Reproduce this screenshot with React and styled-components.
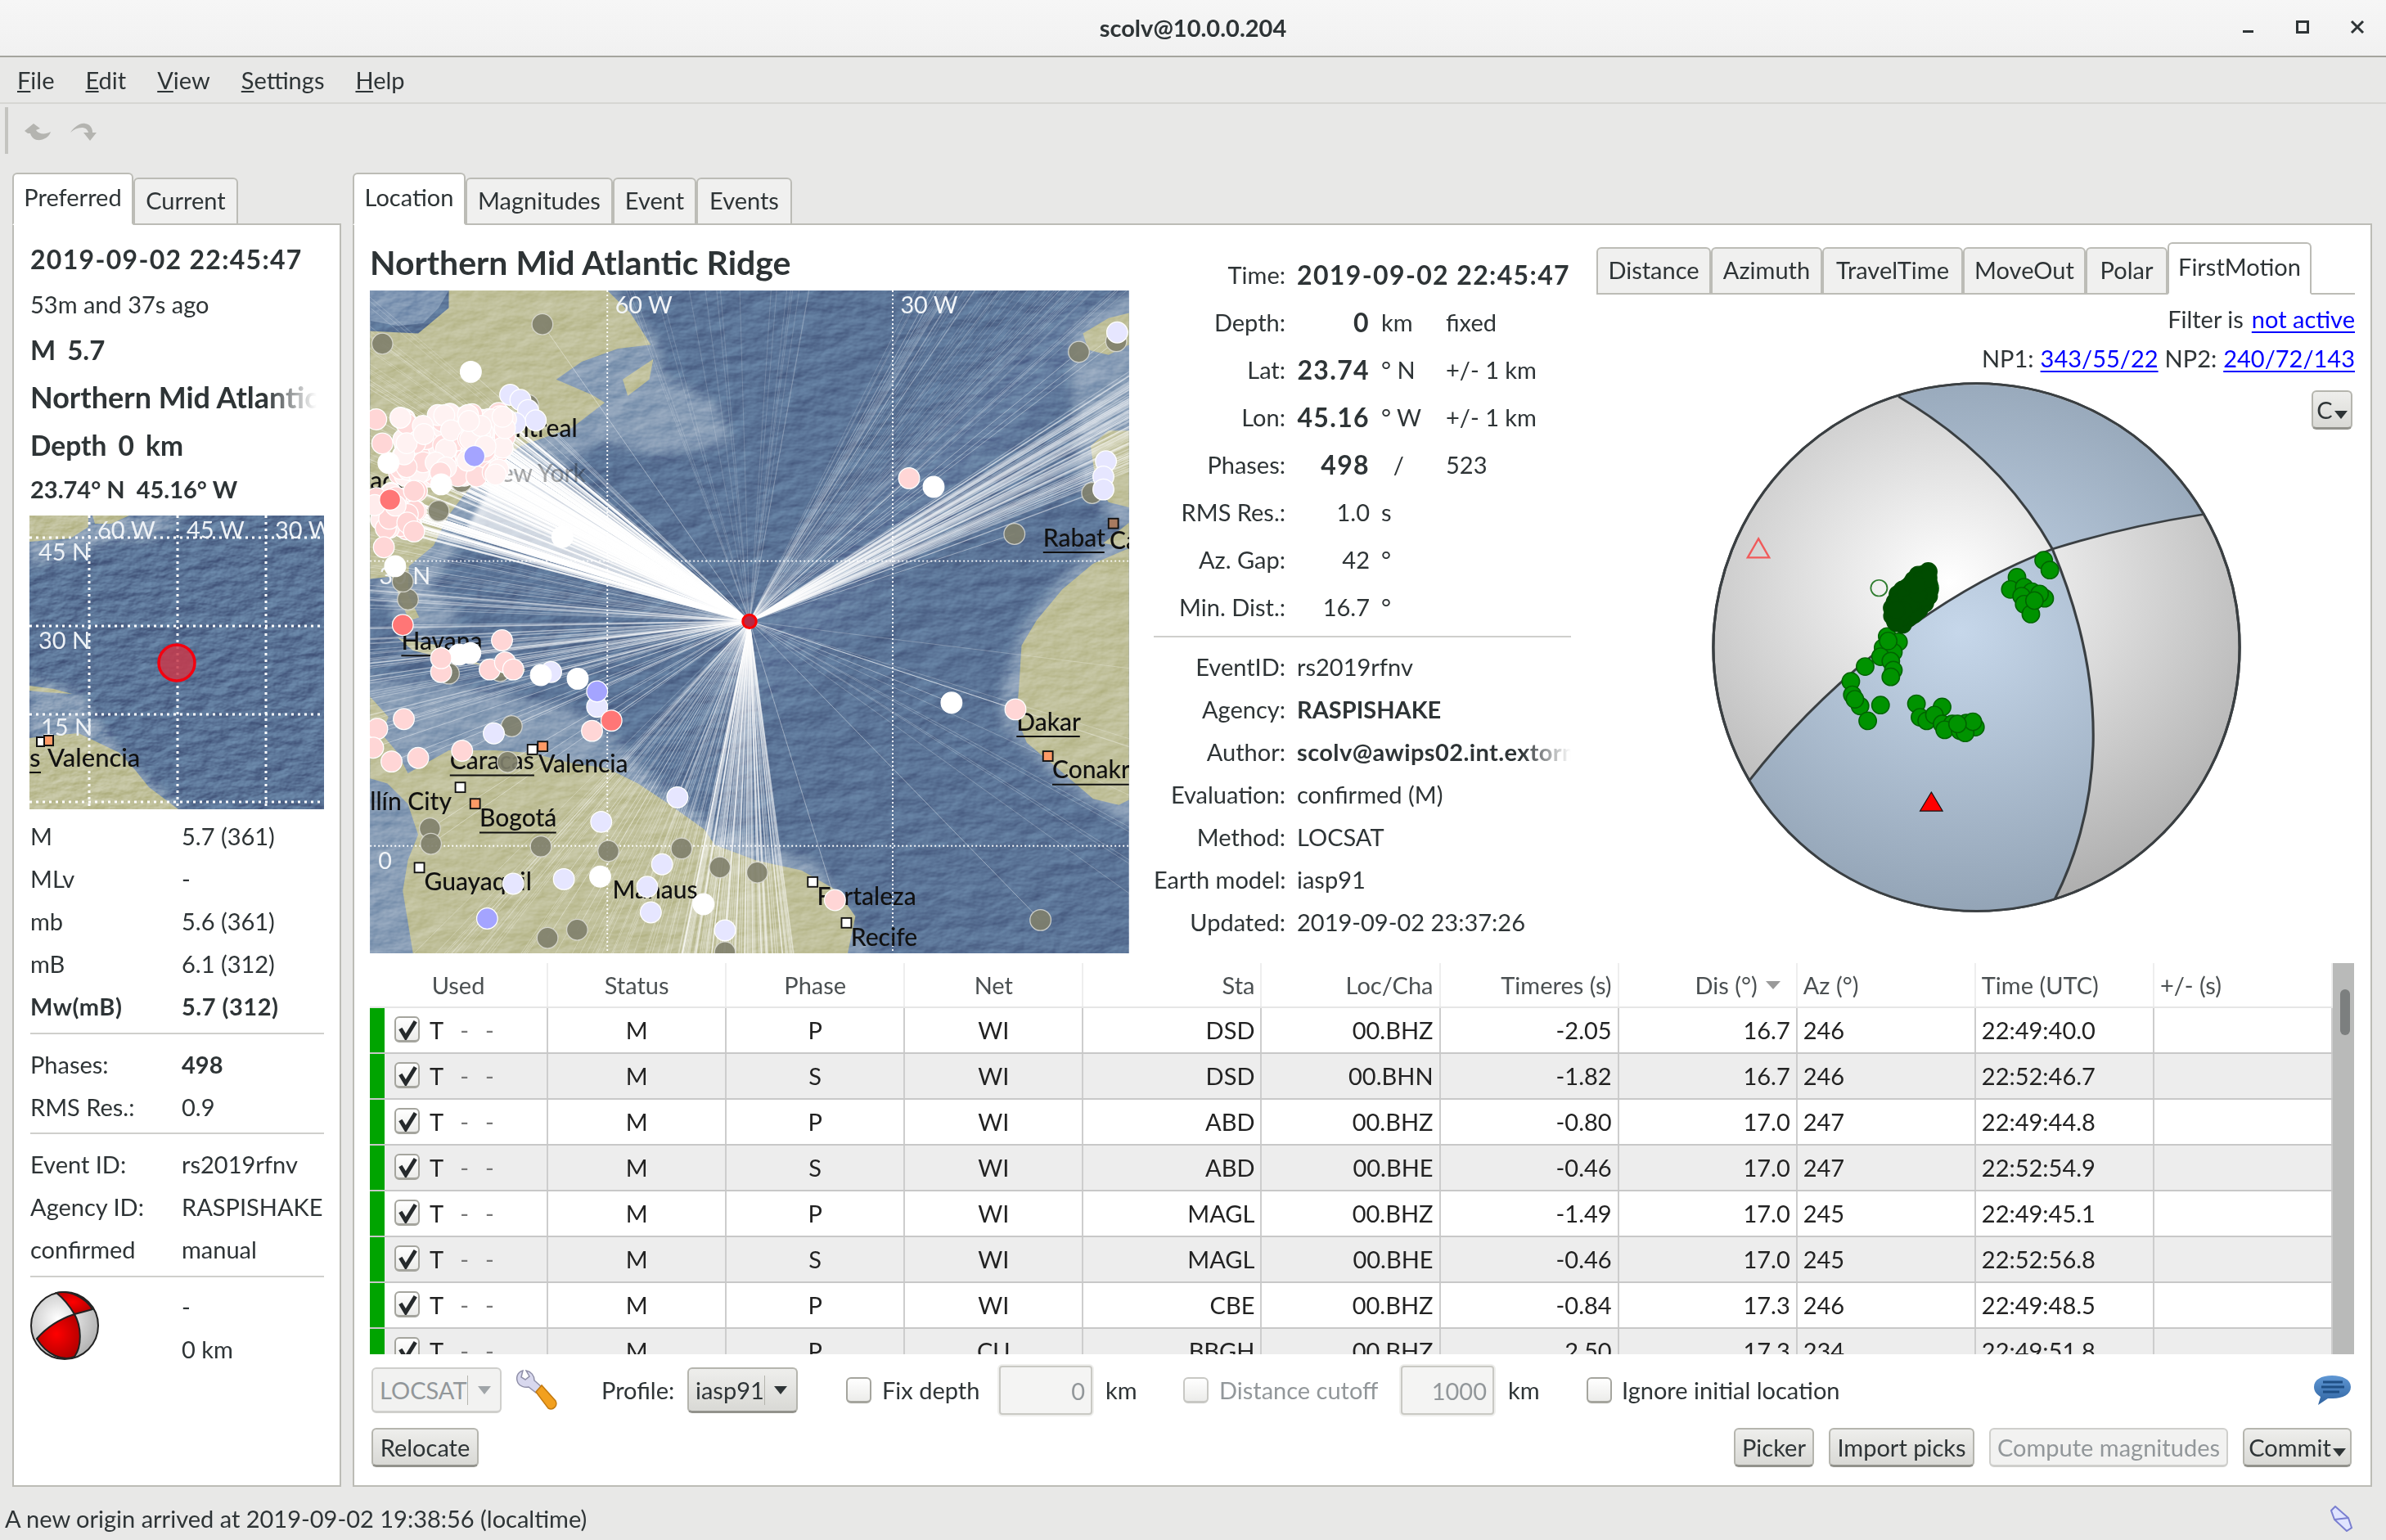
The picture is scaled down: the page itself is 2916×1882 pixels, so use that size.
import React from 'react';
import styled, { createGlobalStyle } from 'styled-components';

const FONT = `Lato, "Noto Sans", sans-serif`;
const INK = '#2e3436';
const OCEAN = '#5a7396';
const SHELF = '#94a8bf';
const LAND = '#c0c09a';

const GlobalStyle = createGlobalStyle`
    * { box-sizing: border-box; }
    html, body { margin: 0; padding: 0; background: #e8e8e7; }
    body { font-family: ${FONT}; font-size: 29px; color: ${INK}; }
`;

// small seeded generator so the scattered map points stay put between runs
const seeded = (seed) => {
    let s = seed;
    return () => {
        s = (s * 16807) % 2147483647;
        return (s - 1) / 2147483646;
    };
};

const Window = styled.div`
    width: 2916px;
    height: 1882px;
    display: flex;
    flex-direction: column;
    overflow: hidden;
    background: #e8e8e7;
`;

const TitleBar = styled.div`
    height: 70px;
    flex: none;
    display: flex;
    align-items: center;
    justify-content: flex-end;
    background: linear-gradient(#f6f6f6, #f1f1f1);
    border-bottom: 2px solid #a5a59e;
    position: relative;
    padding: 0 26px 2px 0;
    gap: 49px;
`;

const WindowTitle = styled.div`
    position: absolute;
    left: 0;
    right: 0;
    text-align: center;
    font-weight: 700;
    font-size: 29px;
`;

const MenuBar = styled.div`
    height: 57px;
    flex: none;
    display: flex;
    align-items: center;
    gap: 38px;
    padding-left: 21px;
    border-bottom: 2px solid #d6d6d3;
`;

const MenuItem = styled.span`
    &::first-letter { text-decoration: underline; }
`;

const ToolBar = styled.div`
    height: 84px;
    flex: none;
    display: flex;
    align-items: flex-start;
    padding: 4px 0 0 6px;
`;

const Handle = styled.div`
    width: 4px;
    height: 57px;
    background: #c4c4c0;
`;

const ToolIcon = styled.svg`
    width: 33px;
    height: 23px;
    margin: 19px 0 0 ${(p) => p.$gap}px;
`;

const Body = styled.div`
    height: 1606px;
    flex: none;
    display: flex;
    padding: 0 15px;
    gap: 14px;
`;

const Side = styled.div`
    width: 402px;
    flex: none;
    display: flex;
    flex-direction: column;
`;

const Main = styled.div`
    width: 2468px;
    flex: none;
    display: flex;
    flex-direction: column;
`;

const TabBar = styled.div`
    height: 64px;
    flex: none;
    display: flex;
    align-items: flex-end;
    margin-bottom: -2px;
    position: relative;
    z-index: 1;
`;

const Tab = styled.div`
    width: ${(p) => p.$w}px;
    height: ${(p) => (p.$active ? 64 : 58)}px;
    flex: none;
    display: flex;
    align-items: center;
    justify-content: center;
    padding-bottom: ${(p) => (p.$active ? 5 : 4)}px;
    background: ${(p) => (p.$active ? '#fff' : '#f0f0ef')};
    border: 2px solid #bcbcb6;
    border-bottom: ${(p) => (p.$active ? '2px solid #fff' : '2px solid #bcbcb6')};
    border-radius: 6px 6px 0 0;
`;

const Panel = styled.div`
    flex: 1;
    min-height: 0;
    background: #fff;
    border: 2px solid #bcbcb6;
    display: flex;
    flex-direction: column;
`;

const SidePanel = styled(Panel)`
    padding: 14px 19px 0 20px;
`;

const SideLine = styled.div`
    height: ${(p) => p.$h}px;
    display: flex;
    align-items: center;
    white-space: nowrap;
    overflow: hidden;
    font-weight: ${(p) => (p.$bold ? 700 : 400)};
    font-size: ${(p) => p.$size || 29}px;
    word-spacing: ${(p) => p.$spread || 0}px;
    letter-spacing: ${(p) => p.$track || 0}px;
    ${(p) => p.$fade && `
        mask-image: linear-gradient(to right, #000 82%, transparent 100%);
        width: 350px;
    `}
`;

const MiniMap = styled.svg`
    display: block;
    flex: none;
    width: 360px;
    height: 359px;
    margin: 7px 0 6px -1px;
`;

const InfoPair = styled.div`
    height: ${(p) => p.$h || 52.2}px;
    display: grid;
    grid-template-columns: 185px 1fr;
    align-items: center;
    white-space: nowrap;
    font-weight: ${(p) => (p.$bold ? 700 : 400)};
    letter-spacing: ${(p) => (p.$bold ? 0.5 : 0)}px;
`;

const StrongValue = styled.span`
    font-weight: 700;
`;

const Rule = styled.div`
    height: 2px;
    flex: none;
    background: #cfcfcc;
    margin: ${(p) => p.$top}px 0 ${(p) => p.$bottom}px;
`;

const BallRow = styled.div`
    display: grid;
    grid-template-columns: 185px 1fr;
`;

const SmallBall = styled.svg`
    width: 84px;
    height: 84px;
    margin-top: 7px;
`;

const TopRow = styled.div`
    height: 890px;
    flex: none;
    display: flex;
    padding-left: 19px;
`;

const MapColumn = styled.div`
    width: 928px;
    flex: none;
`;

const RegionTitle = styled.div`
    height: 80px;
    padding-top: 24px;
    font-size: 41px;
    font-weight: 700;
    line-height: 44px;
    white-space: nowrap;
`;

const BigMap = styled.svg`
    display: block;
    width: 928px;
    height: 810px;
`;

const InfoColumn = styled.div`
    width: 510px;
    flex: none;
    margin-left: 30px;
    padding-top: 31px;
`;

const FactRow = styled.div`
    height: ${(p) => p.$h}px;
    display: grid;
    grid-template-columns: 161px 89px 65px auto;
    column-gap: 14px;
    align-items: center;
    white-space: nowrap;
`;

const FactLabel = styled.div`
    text-align: right;
`;

const FactNumber = styled.div`
    text-align: right;
    ${(p) => p.$bold && `
        font-weight: 700;
        font-size: 32px;
        letter-spacing: 1.35px;
    `}
`;

const FactWide = styled.div`
    grid-column: 2 / -1;
    font-weight: ${(p) => (p.$bold ? 700 : 400)};
    overflow: hidden;
    ${(p) => p.$digits && `
        font-size: 32px;
        letter-spacing: 1.37px;
    `}
    ${(p) => p.$fade && `
        letter-spacing: 0.4px;
        mask-image: linear-gradient(to right, #000 82%, transparent 100%);
    `}
`;

const PlotColumn = styled.div`
    width: 927px;
    flex: none;
    margin-left: 31px;
    padding-top: 20px;
`;

const PlotTabs = styled.div`
    height: 65px;
    display: flex;
    align-items: flex-end;
    border-bottom: 2px solid #bcbcb6;
`;

const PlotTab = styled(Tab)`
    margin-bottom: -2px;
`;

const PlotLine = styled.div`
    height: ${(p) => p.$h}px;
    display: flex;
    justify-content: flex-end;
    align-items: center;
    gap: ${(p) => p.$gap || 10}px;
    white-space: nowrap;
`;

const LinkText = styled.span`
    color: #0000ff;
    text-decoration: underline;
    text-underline-offset: 4px;
`;

const PlotBody = styled.div`
    display: flex;
    align-items: flex-start;
`;

const Beach = styled.svg`
    width: 647px;
    height: 648px;
    margin: 11px 0 0 141px;
    flex: none;
`;

const Table = styled.div`
    height: 478px;
    flex: none;
    display: flex;
    margin: 12px 20px 0 19px;
    overflow: hidden;
`;

const TableMain = styled.div`
    flex: 1;
    min-width: 0;
`;

const HeaderRow = styled.div`
    height: 55px;
    display: grid;
    grid-template-columns: repeat(11, 1fr);
    border-bottom: 2px solid #e6e6e6;
`;

const HeaderCell = styled.div`
    display: flex;
    align-items: center;
    justify-content: ${(p) => p.$align};
    padding: 0 7px;
    gap: 10px;
    color: #4b5052;
    border-right: 2px solid #eeeeee;
`;

const SortCaret = styled.span`
    width: 0;
    height: 0;
    margin-right: 12px;
    border-left: 9px solid transparent;
    border-right: 9px solid transparent;
    border-top: 10px solid #9a9a9a;
`;

const DataRow = styled.div`
    height: 56px;
    display: grid;
    grid-template-columns: repeat(11, 1fr);
    background: ${(p) => (p.$alt ? '#ededed' : '#fff')};
    border-bottom: 2px solid #c8c8c8;
`;

const Cell = styled.div`
    display: flex;
    align-items: center;
    justify-content: ${(p) => p.$align};
    padding: 0 7px 2px;
    color: #222;
    border-right: 2px solid #cdcdcd;
`;

const UsedCell = styled(Cell)`
    border-left: 18px solid #00a400;
    padding-left: 12px;
`;

const UsedFlag = styled.span`
    margin-left: 12px;
`;

const Dim = styled.span`
    color: #777;
    margin-left: 20px;
`;

const CheckBox = styled.span`
    width: 31px;
    height: 32px;
    flex: none;
    display: inline-flex;
    align-items: center;
    justify-content: center;
    border: 2px solid ${(p) => (p.$disabled ? '#c8c8c4' : '#a5a59e')};
    border-bottom-width: 3px;
    border-radius: 6px;
    background: linear-gradient(#fff, #ececea);
`;

const ScrollTrack = styled.div`
    width: 26px;
    flex: none;
    background: #b9bab9;
    padding: 32px 5px 0 9px;
`;

const ScrollThumb = styled.div`
    height: 56px;
    background: #7c7f7f;
    border-radius: 6px;
`;

const ControlRow = styled.div`
    height: 64px;
    flex: none;
    display: flex;
    align-items: center;
    margin: 12px 23px 0 21px;
`;

const ButtonRow = styled.div`
    height: 48px;
    flex: none;
    display: flex;
    margin: 14px 23px 0 21px;
`;

const Push = styled.div`
    flex: 1;
`;

const Button = styled.div`
    width: ${(p) => p.$w}px;
    height: 48px;
    flex: none;
    margin-left: ${(p) => p.$gap || 0}px;
    display: flex;
    align-items: center;
    justify-content: center;
    gap: 2px;
    border: 2px solid ${(p) => (p.$off ? '#cfcfcc' : '#b5b5ae')};
    border-bottom: 3px solid ${(p) => (p.$off ? '#cfcfcc' : '#92928c')};
    border-radius: 6px;
    color: ${(p) => (p.$off ? '#92979a' : INK)};
    background: ${(p) => (p.$off ? '#f2f2f1' : 'linear-gradient(#eeeeec, #d9d9d5)')};
    white-space: nowrap;
`;

const CornerButton = styled(Button)`
    margin-top: 21px;
`;

const Combo = styled(Button)`
    height: 56px;
    justify-content: flex-start;
    padding-left: 8px;
    gap: 0;
`;

const ComboText = styled.span`
    flex: 1;
`;

const ComboArrow = styled.span`
    width: 40px;
    height: 36px;
    flex: none;
    display: flex;
    align-items: center;
    justify-content: center;
    border-left: 1px solid #b5b5ae;
`;

const Caret = styled.span`
    width: 0;
    height: 0;
    margin-top: ${(p) => (p.$low ? 12 : 0)}px;
    border-left: 8px solid transparent;
    border-right: 8px solid transparent;
    border-top: 10px solid ${(p) => p.$color || INK};
`;

const Tool = styled.svg`
    width: 52px;
    height: 50px;
    flex: none;
    margin-left: ${(p) => p.$gap}px;
`;

const Label = styled.span`
    width: ${(p) => p.$w}px;
    margin-left: ${(p) => p.$gap}px;
    padding-bottom: 2px;
    color: ${(p) => (p.$off ? '#92979a' : INK)};
    white-space: nowrap;
    flex: none;
`;

const NumberInput = styled.div`
    width: 118px;
    height: 64px;
    flex: none;
    display: flex;
    align-items: center;
    justify-content: flex-end;
    padding-right: 8px;
    color: #92979a;
    background: #f4f4f3;
    border: 3px solid #efefed;
    outline: 2px solid #c9c9c4;
    outline-offset: -4px;
    border-radius: 6px;
`;

const CheckSlot = styled.div`
    margin-left: ${(p) => p.$gap || 0}px;
    flex: none;
    display: flex;
`;

const StatusBar = styled.div`
    flex: 1;
    display: flex;
    align-items: center;
    justify-content: space-between;
    padding: 12px 40px 0 6px;
`;

const Mark = () => (
    <svg width="26" height="26" viewBox="0 0 24 24">
        <path d="M4 11 L10 21 L21 3" fill="none" stroke="#262a2c" strokeWidth="4.5" />
    </svg>
);

const CityLabel = ({ x, y, w, children, faded }) => (
    <g opacity={faded ? 0.35 : 1}>
        <text x={x} y={y} fontFamily={FONT} fontSize="48" fontWeight="500" fill="#111">{children}</text>
        {w && <line x1={x} x2={x + w} y1={y + 12} y2={y + 12} stroke="#111" strokeWidth="3" />}
    </g>
);

const Square = ({ x, y, fill = '#fff' }) => (
    <rect x={x} y={y} width="19" height="19" fill={fill} stroke="#111" strokeWidth="3" />
);

const GRAY = [[373,332],[60,370],[1422,386],[1296,742],[1448,662],[170,697],[110,870],[100,835],[153,1318],[155,1348],[370,1353],[502,1362],[645,1357],[720,1394],[793,1404],[383,1532],[441,1516],[1347,1497],[313,1118],[305,1188],[345,490],[215,640],[190,1015],[290,1010],[730,1560],[1495,365]];
const PALE = [[310,470],[330,480],[345,500],[360,520],[320,525],[290,560],[250,585],[1497,348],[1475,600],[1470,630],[1470,655],[278,1132],[637,1257],[488,1305],[607,1388],[415,1417],[316,1426],[578,1432],[585,1482],[730,1517],[390,1012],[480,1080]];
const STRONG = [[480,1050],[265,1494],[240,590]];
const WHITE = [[233,425],[412,748],[1138,650],[1173,1072],[442,1025],[486,1412],[688,1466],[72,603],[175,645],[232,975],[210,978],[370,1018],[85,805]];
const PINK = [[1090,633],[1298,1085],[945,1458],[63,768],[122,737],[122,658],[60,565],[48,518],[294,950],[175,1012],[175,985],[270,1007],[300,993],[316,1007],[470,1127],[102,1104],[50,1123],[78,1187],[130,1180],[42,1160],[216,1166]];
const HOT = [[508,1107],[100,920],[75,675]];
const EPI = [778, 913];

const clusterDots = (() => {
    const r = seeded(4711);
    const dots = [];
    for (let i = 0; i < 150; i++) {
        dots.push([92 + r() * 210, 505 + r() * 125, r() > 0.5 ? '#ffdcdc' : '#fff2f2']);
    }
    for (let i = 0; i < 40; i++) {
        dots.push([40 + r() * 90, 655 + r() * 80, r() > 0.4 ? '#ffd5d5' : '#ffecec']);
    }
    return dots;
})();

const fanRays = (() => {
    const r = seeded(90210);
    const rays = [];
    for (let i = 0; i < 420; i++) {
        const a = clusterDots[Math.floor(r() * clusterDots.length)];
        rays.push([a[0], a[1], 0.5, 2.6]);
    }
    for (let i = 0; i < 90; i++) rays.push([1520, 420 + r() * 200, 0.34, 2]);
    for (let i = 0; i < 60; i++) rays.push([1100 + r() * 420, 266, 0.2, 1.6]);
    for (let i = 0; i < 80; i++) rays.push([640 + r() * 240, 1562, 0.4, 2]);
    for (let i = 0; i < 50; i++) rays.push([36, 840 + r() * 300, 0.3, 1.8]);
    for (let i = 0; i < 46; i++) rays.push([36, 266 + r() * 560, 0.22, 1.6]);
    for (let i = 0; i < 44; i++) rays.push([120 + r() * 520, 1562, 0.28, 1.6]);
    for (let i = 0; i < 18; i++) rays.push([520 + r() * 380, 266, 0.2, 1.4]);
    for (let i = 0; i < 10; i++) rays.push([1520, 880 + r() * 700, 0.28, 1.4]);
    return rays;
})();

const Relief = ({ id, freq, depth }) => (
    <filter id={id} x="0" y="0" width="100%" height="100%" colorInterpolationFilters="sRGB">
        <feTurbulence type="fractalNoise" baseFrequency={freq} numOctaves="4" seed="7" />
        <feDiffuseLighting surfaceScale={depth} lightingColor="#fff">
            <feDistantLight azimuth="225" elevation="30" />
        </feDiffuseLighting>
    </filter>
);

const Station = ({ p, fill, stroke = '#ffffff', opacity = 1 }) => (
    <circle cx={p[0]} cy={p[1]} r="20.5" fill={fill} stroke={stroke} strokeWidth="2" opacity={opacity} />
);

const LocationMap = () => (
    <BigMap viewBox="36 266 1484 1296">
        <defs>
            <Relief id="reliefBig" freq="0.016 0.03" depth="5" />
            <filter id="shelfBlur"><feGaussianBlur stdDeviation="11" /></filter>
            <filter id="ridgeBlur"><feGaussianBlur stdDeviation="40" /></filter>
            <filter id="fanBlur"><feGaussianBlur stdDeviation="4" /></filter>
        </defs>
        <rect x="36" y="266" width="1484" height="1296" fill={OCEAN} />
        <path d="M760 1050 C900 850 1150 640 1450 300" fill="none" stroke="#7088ab" strokeWidth="120" opacity="0.5" filter="url(#ridgeBlur)" />
        <g fill={SHELF} stroke={SHELF} strokeWidth="34" strokeLinejoin="round" opacity="0.8" filter="url(#shelfBlur)">
            <path d="M500 270 L585 375 L590 440 L700 500 L720 550 L600 570 L480 540 L400 600 L260 680 L190 760 L130 850 L190 900 L130 930 L60 840 Z" />
            <path d="M36 1040 L220 1060 L420 1100 L500 1150 L560 1220 L700 1330 L900 1400 L1000 1562 L36 1562 Z" />
            <path d="M1520 740 L1410 830 L1330 930 L1290 1040 L1290 1110 L1400 1220 L1520 1290 Z" />
            <path d="M1420 350 L1520 290 L1520 720 L1440 640 Z" />
        </g>
        <g fill={LAND}>
            <path d="M36 345 L130 350 L190 300 L190 266 L500 266 L545 310 L585 372 L520 380 L450 405 L400 440 L470 470 L495 485 L430 535 L330 570 L260 625 L220 665 L190 705 L160 765 L112 805 L110 860 L132 905 L112 912 L92 860 L78 825 L36 830 Z" />
            <path d="M530 440 L590 400 L582 440 L540 472 Z" />
            <path d="M36 1060 L72 1100 L58 1132 L90 1170 L110 1210 L190 1165 L280 1165 L350 1170 L430 1190 L500 1200 L560 1230 L620 1270 L690 1320 L710 1350 L790 1380 L880 1400 L950 1440 L985 1490 L970 1562 L120 1562 L100 1440 L110 1380 L130 1330 L110 1270 L70 1230 L36 1220 Z" />
            <path d="M1520 770 L1450 800 L1390 850 L1340 910 L1310 960 L1305 1040 L1300 1100 L1320 1150 L1380 1200 L1450 1260 L1500 1272 L1520 1262 Z" />
            <path d="M1445 570 L1480 540 L1520 540 L1520 690 L1480 680 L1455 640 Z" />
            <path d="M1520 720 L1470 760 L1520 770 Z" />
            <path d="M1430 350 L1480 320 L1520 310 L1520 372 L1480 392 L1440 382 Z" />
            <path d="M90 945 L170 960 L260 1000 L200 990 L120 970 Z" />
            <path d="M262 1002 L340 1006 L330 1024 L270 1020 Z" />
        </g>
        <path d="M36 266 H190 L170 300 L140 330 L90 335 L36 325 Z" fill="#7f96b3" />
        <rect x="36" y="266" width="1484" height="1296" filter="url(#reliefBig)" opacity="0.3" style={{ mixBlendMode: 'overlay' }} />
        <g stroke="#fff" strokeDasharray="3 5" strokeWidth="3">
            <line x1="36" x2="1520" y1="795" y2="795" />
            <line x1="36" x2="1520" y1="1352" y2="1352" />
            <line x1="500" x2="500" y1="266" y2="1562" />
            <line x1="1058" x2="1058" y1="266" y2="1562" />
        </g>
        <g fontFamily={FONT} fontSize="46" fill="#f2f5f8">
            <text x="515" y="311">60 W</text>
            <text x="1073" y="311">30 W</text>
            <text x="54" y="840">30 N</text>
            <text x="52" y="1397">0</text>
        </g>
        <path d={`M${EPI[0]} ${EPI[1]} L300 600 L220 740 Z`} fill="#fff" opacity="0.72" filter="url(#fanBlur)" />
        <g fill="none">
            {fanRays.map((ray, i) => (
                <line key={i} x1={EPI[0]} y1={EPI[1]} x2={ray[0]} y2={ray[1]} stroke="#fff" strokeOpacity={ray[2]} strokeWidth={ray[3]} />
            ))}
            {[...GRAY, ...PALE, ...STRONG, ...WHITE, ...PINK, ...HOT].map((p, i) => (
                <line key={i} x1={EPI[0]} y1={EPI[1]} x2={p[0]} y2={p[1]} stroke="#fff" strokeOpacity="0.4" strokeWidth="1.6" />
            ))}
        </g>
        <CityLabel x={320} y={552}>ntreal</CityLabel>
        <CityLabel x={255} y={640} faded>New York</CityLabel>
        <CityLabel x={36} y={655}>ade</CityLabel>
        <CityLabel x={1352} y={766} w={120}>Rabat</CityLabel>
        <CityLabel x={1482} y={772}>Ca</CityLabel>
        <CityLabel x={97} y={968} w={125}>Havana</CityLabel>
        <CityLabel x={192} y={1202} w={165}>Caracas</CityLabel>
        <CityLabel x={365} y={1208}>Valencia</CityLabel>
        <CityLabel x={36} y={1282}>llín City</CityLabel>
        <CityLabel x={250} y={1314} w={150}>Bogotá</CityLabel>
        <CityLabel x={142} y={1438}>Guayaquil</CityLabel>
        <CityLabel x={510} y={1455}>Manaus</CityLabel>
        <CityLabel x={910} y={1468}>Fortaleza</CityLabel>
        <CityLabel x={976} y={1548}>Recife</CityLabel>
        <CityLabel x={1300} y={1126} w={124}>Dakar</CityLabel>
        <CityLabel x={1370} y={1220} w={150}>Conakry</CityLabel>
        <Square x={203} y={1228} />
        <Square x={344} y={1154} />
        <Square x={364} y={1148} fill="#ff9a66" />
        <Square x={232} y={1260} fill="#ff9a66" />
        <Square x={123} y={1385} />
        <Square x={892} y={1413} />
        <Square x={958} y={1493} />
        <Square x={1352} y={1167} fill="#ff9a66" />
        <Square x={1480} y={712} fill="#a87b60" />
        {GRAY.map((p, i) => <Station key={i} p={p} fill="#80806c" stroke="#d8d8d0" opacity="0.9" />)}
        {PALE.map((p, i) => <Station key={i} p={p} fill="#e6e6ff" />)}
        {clusterDots.map((d, i) => <Station key={i} p={d} fill={d[2]} />)}
        {STRONG.map((p, i) => <Station key={i} p={p} fill="#a4a4ff" />)}
        {WHITE.map((p, i) => <Station key={i} p={p} fill="#fff" />)}
        {PINK.map((p, i) => <Station key={i} p={p} fill="#ffd6d6" />)}
        {HOT.map((p, i) => <Station key={i} p={p} fill="#ff7676" />)}
        <circle cx={EPI[0]} cy={EPI[1]} r="13" fill="#b52a45" stroke="#ff0000" strokeWidth="5" />
    </BigMap>
);

const OverviewMap = () => (
    <MiniMap viewBox="0 0 360 359">
        <defs>
            <Relief id="reliefMini" freq="0.035 0.07" depth="3.5" />
            <filter id="miniBlur"><feGaussianBlur stdDeviation="6" /></filter>
        </defs>
        <rect width="360" height="359" fill={OCEAN} />
        <g fill={SHELF} opacity="0.8" filter="url(#miniBlur)">
            <path d="M0 0 H190 L150 30 L100 30 L50 50 L0 62 Z" />
            <path d="M0 200 L60 215 L90 260 L130 310 L190 359 H0 Z" />
        </g>
        <g fill={LAND}>
            <path d="M0 0 H72 V14 L50 28 L0 32 Z" />
            <path d="M77 0 H122 L100 10 L80 10 Z" />
            <path d="M0 208 L30 212 L52 218 L20 216 L0 214 Z" />
            <path d="M0 272 L15 270 L60 266 L110 290 L130 312 L146 332 L182 359 H0 Z" />
        </g>
        <rect width="360" height="359" filter="url(#reliefMini)" opacity="0.3" style={{ mixBlendMode: 'overlay' }} />
        <g stroke="#fff" strokeDasharray="3 5" strokeWidth="3">
            <line x1="0" x2="360" y1="27" y2="27" />
            <line x1="0" x2="360" y1="135" y2="135" />
            <line x1="0" x2="360" y1="243" y2="243" />
            <line x1="0" x2="360" y1="350" y2="350" />
            <line x1="73" x2="73" y1="0" y2="359" />
            <line x1="181" x2="181" y1="0" y2="359" />
            <line x1="289" x2="289" y1="0" y2="359" />
        </g>
        <g fontFamily={FONT} fontSize="29" fill="#eef2f6">
            <text x="83" y="28">60 W</text>
            <text x="192" y="28">45 W</text>
            <text x="300" y="28">30 W</text>
            <text x="11" y="55">45 N</text>
            <text x="11" y="163">30 N</text>
            <text x="14" y="269">15 N</text>
        </g>
        <circle cx="180" cy="180" r="22" fill="#c63a4b" fillOpacity="0.85" stroke="#f4000f" strokeWidth="3.5" />
        <rect x="9" y="271" width="9" height="11" fill="#fff" stroke="#111" strokeWidth="2" />
        <rect x="18" y="269" width="11" height="12" fill="#ff9a66" stroke="#111" strokeWidth="2" />
        <text x="0" y="307" fontFamily={FONT} fontSize="31" fontWeight="500" fill="#111">s</text>
        <line x1="0" x2="14" y1="314" y2="314" stroke="#111" strokeWidth="2" />
        <text x="22" y="307" fontFamily={FONT} fontSize="31" fontWeight="500" fill="#111">Valencia</text>
    </MiniMap>
);

const GREEN = [[903,740],[915,762],[851,778],[838,805],[865,800],[880,810],[860,820],[905,825],[895,815],[865,838],[878,860],[885,830],[598,910],[620,922],[590,935],[610,945],[585,955],[605,965],[610,985],[605,1000],[555,977],[600,920],[527,1010],[530,1040],[545,1065],[585,1063],[560,1098],[535,1050],[655,1060],[662,1090],[675,1098],[705,1067],[690,1085],[705,1105],[725,1105],[710,1118],[740,1120],[752,1103],[770,1112],[750,1125],[765,1100],[735,1105]];

const darkDots = (() => {
    const r = seeded(1234);
    const dots = [];
    for (let i = 0; i < 120; i++) {
        const t = r();
        dots.push([672 - t * 52 + (r() - 0.5) * (16 + 44 * Math.sin(t * 3)), 772 + t * 105 + (r() - 0.5) * 16]);
    }
    return dots;
})();

const Dot = ({ p, fill, stroke }) => (
    <ellipse cx={p[0]} cy={p[1]} rx="17" ry="19.5" fill={fill} stroke={stroke} strokeWidth="2.5" />
);

const FocalBall = () => (
    <Beach viewBox="256 343 1032 1182" preserveAspectRatio="none">
        <defs>
            <radialGradient id="ballGray" gradientUnits="userSpaceOnUse" cx="720" cy="790" r="720">
                <stop offset="0" stopColor="#ffffff" />
                <stop offset="1" stopColor="#b0b0b0" />
            </radialGradient>
            <radialGradient id="ballBlue" gradientUnits="userSpaceOnUse" cx="740" cy="900" r="690">
                <stop offset="0" stopColor="#c6d7ea" />
                <stop offset="1" stopColor="#8e9fb1" />
            </radialGradient>
        </defs>
        <ellipse cx="772" cy="934" rx="513" ry="588" fill="url(#ballGray)" stroke="#3a3f42" strokeWidth="5" />
        <path d="M620 375 A513 588 0 0 1 1213 638 Q1060 665 920 715 Q820 510 620 375 Z" fill="url(#ballBlue)" />
        <path d="M920 715 C700 810 480 1010 330 1230 A513 588 0 0 0 925 1495 C1010 1300 1040 1040 920 715 Z" fill="url(#ballBlue)" />
        <path d="M620 375 Q820 510 920 715 C1040 1040 1010 1300 925 1495" fill="none" stroke="#3a3f42" strokeWidth="5" />
        <path d="M1213 638 Q1060 665 920 715 C700 810 480 1010 330 1230" fill="none" stroke="#3a3f42" strokeWidth="5" />
        <ellipse cx="772" cy="934" rx="513" ry="588" fill="none" stroke="#3a3f42" strokeWidth="5" />
        <path d="M347 692 L368 734 L326 734 Z" fill="none" stroke="#f05a5a" strokeWidth="4" />
        <path d="M684 1257 L706 1299 L662 1299 Z" fill="#ff0000" stroke="#111" strokeWidth="2" />
        <ellipse cx="582" cy="802" rx="16" ry="18" fill="none" stroke="#2f7d2f" strokeWidth="3" />
        <ellipse cx="685" cy="802" rx="13" ry="18" fill="#fff" stroke="#2f7d2f" strokeWidth="3" />
        {GREEN.map((p, i) => <Dot key={i} p={p} fill="#009300" stroke="#006400" />)}
        {darkDots.map((p, i) => <Dot key={i} p={p} fill="#004c00" stroke="#004c00" />)}
    </Beach>
);

const ROWS = [
    ['P', 'WI', 'DSD', '00.BHZ', '-2.05', '16.7', '246', '22:49:40.0'],
    ['S', 'WI', 'DSD', '00.BHN', '-1.82', '16.7', '246', '22:52:46.7'],
    ['P', 'WI', 'ABD', '00.BHZ', '-0.80', '17.0', '247', '22:49:44.8'],
    ['S', 'WI', 'ABD', '00.BHE', '-0.46', '17.0', '247', '22:52:54.9'],
    ['P', 'WI', 'MAGL', '00.BHZ', '-1.49', '17.0', '245', '22:49:45.1'],
    ['S', 'WI', 'MAGL', '00.BHE', '-0.46', '17.0', '245', '22:52:56.8'],
    ['P', 'WI', 'CBE', '00.BHZ', '-0.84', '17.3', '246', '22:49:48.5'],
    ['P', 'CU', 'BBGH', '00.BHZ', '2.50', '17.3', '234', '22:49:51.8'],
];

const HEADS = [
    ['Used', 'center'], ['Status', 'center'], ['Phase', 'center'], ['Net', 'center'],
    ['Sta', 'flex-end'], ['Loc/Cha', 'flex-end'], ['Timeres (s)', 'flex-end'], ['Dis (°)', 'flex-end'],
    ['Az (°)', 'flex-start'], ['Time (UTC)', 'flex-start'], ['+/- (s)', 'flex-start'],
];

const Arrivals = () => (
    <Table>
        <TableMain>
            <HeaderRow>
                {HEADS.map(([name, align]) => (
                    <HeaderCell key={name} $align={align}>
                        {name}
                        {name.startsWith('Dis') && <SortCaret />}
                    </HeaderCell>
                ))}
            </HeaderRow>
            {ROWS.map((row, i) => (
                <DataRow key={i} $alt={i % 2 === 1}>
                    <UsedCell $align="flex-start">
                        <CheckBox><Mark /></CheckBox>
                        <UsedFlag>T</UsedFlag>
                        <Dim>-</Dim>
                        <Dim>-</Dim>
                    </UsedCell>
                    <Cell $align="center">M</Cell>
                    <Cell $align="center">{row[0]}</Cell>
                    <Cell $align="center">{row[1]}</Cell>
                    <Cell $align="flex-end">{row[2]}</Cell>
                    <Cell $align="flex-end">{row[3]}</Cell>
                    <Cell $align="flex-end">{row[4]}</Cell>
                    <Cell $align="flex-end">{row[5]}</Cell>
                    <Cell $align="flex-start">{row[6]}</Cell>
                    <Cell $align="flex-start">{row[7]}</Cell>
                    <Cell $align="flex-start" />
                </DataRow>
            ))}
        </TableMain>
        <ScrollTrack><ScrollThumb /></ScrollTrack>
    </Table>
);

const Wrench = () => (
    <Tool $gap={16} viewBox="0 0 52 50">
        <path d="M10 1 C3 3 1 10 4 16 C6 20 12 22 17 21 L26 28 L33 21 L24 13 C24 7 20 2 14 1 L18 8 L13 12 L8 9 Z" fill="#d8d8ee" stroke="#8f8fa8" strokeWidth="1.5" />
        <path d="M26 27 L33 19 L50 38 C53 44 47 50 41 47 Z" fill="#f2a01f" stroke="#c47a10" strokeWidth="1.5" />
    </Tool>
);

const Bubble = () => (
    <svg width="47" height="38" viewBox="0 0 47 38">
        <defs>
            <linearGradient id="bubbleFill" x1="0" y1="0" x2="0" y2="1">
                <stop offset="0" stopColor="#5f97d4" />
                <stop offset="1" stopColor="#2f63a0" />
            </linearGradient>
        </defs>
        <path d="M23 1 C36 1 46 6 46 15 C46 24 36 29 24 29 L18 29 L6 37 L9 27 C4 24 1 20 1 15 C1 6 10 1 23 1 Z" fill="url(#bubbleFill)" />
        <g stroke="#1f4f85" strokeWidth="3">
            <line x1="12" x2="36" y1="9" y2="9" />
            <line x1="10" x2="38" y1="15" y2="15" />
            <line x1="12" x2="32" y1="21" y2="21" />
        </g>
    </svg>
);

export default function App() {
    return (
        <Window>
            <GlobalStyle />
            <TitleBar>
                <WindowTitle>scolv@10.0.0.204</WindowTitle>
                <svg width="16" height="16" viewBox="0 0 16 16"><rect x="1" y="12" width="13" height="3" fill="#2e3436" /></svg>
                <svg width="18" height="18" viewBox="0 0 18 18"><rect x="2.5" y="2.5" width="13" height="13" fill="none" stroke="#2e3436" strokeWidth="3" /></svg>
                <svg width="18" height="18" viewBox="0 0 18 18"><path d="M2 2 L16 16 M16 2 L2 16" stroke="#2e3436" strokeWidth="3" /></svg>
            </TitleBar>
            <MenuBar>
                {['File', 'Edit', 'View', 'Settings', 'Help'].map((m) => <MenuItem key={m}>{m}</MenuItem>)}
            </MenuBar>
            <ToolBar>
                <Handle />
                <ToolIcon $gap={20} viewBox="0 0 33 23">
                    <path d="M0 10 L11 1 L19 7 L14 9 C17 14 25 15 32 11 C30 18 22 22 15 21 C10 20 8 16 7 13 L4 13 Z" fill="#b4b4b0" />
                </ToolIcon>
                <ToolIcon $gap={23} viewBox="0 0 33 23">
                    <path d="M0 12 C6 4 12 0 18 1 C24 2 27 6 27 12 L32 12 L24 22 L16 12 L22 12 C21 8 18 6 14 6 C9 6 4 8 0 12 Z" fill="#b4b4b0" />
                </ToolIcon>
            </ToolBar>
            <Body>
                <Side>
                    <TabBar>
                        <Tab $w={148} $active>Preferred</Tab>
                        <Tab $w={128}>Current</Tab>
                    </TabBar>
                    <SidePanel>
                        <SideLine $h={55} $bold $size={32} $track={1.3}>2019-09-02 22:45:47</SideLine>
                        <SideLine $h={55}>53m and 37s ago</SideLine>
                        <SideLine $h={55} $bold $size={33} $spread={6}>M 5.7</SideLine>
                        <SideLine $h={61} $bold $size={36} $fade>Northern Mid Atlantic</SideLine>
                        <SideLine $h={57} $bold $size={33.5} $spread={6}>Depth 0 km</SideLine>
                        <SideLine $h={51} $bold>23.74° N&nbsp; 45.16° W</SideLine>
                        <OverviewMap />
                        <InfoPair>M<span>5.7 (361)</span></InfoPair>
                        <InfoPair>MLv<span>-</span></InfoPair>
                        <InfoPair>mb<span>5.6 (361)</span></InfoPair>
                        <InfoPair>mB<span>6.1 (312)</span></InfoPair>
                        <InfoPair $bold>Mw(mB)<span>5.7 (312)</span></InfoPair>
                        <Rule $top={6} $bottom={10} />
                        <InfoPair>Phases:<StrongValue>498</StrongValue></InfoPair>
                        <InfoPair>RMS Res.:<span>0.9</span></InfoPair>
                        <Rule $top={6} $bottom={10} />
                        <InfoPair>Event ID:<span>rs2019rfnv</span></InfoPair>
                        <InfoPair>Agency ID:<span>RASPISHAKE</span></InfoPair>
                        <InfoPair>confirmed<span>manual</span></InfoPair>
                        <Rule $top={6} $bottom={10} />
                        <BallRow>
                            <SmallBall viewBox="0 0 84 84">
                                <defs>
                                    <radialGradient id="tinyGray" cx="0.4" cy="0.4" r="0.7">
                                        <stop offset="0" stopColor="#fff" />
                                        <stop offset="1" stopColor="#aaa" />
                                    </radialGradient>
                                    <radialGradient id="tinyRed" cx="0.45" cy="0.45" r="0.7">
                                        <stop offset="0" stopColor="#ff0000" />
                                        <stop offset="1" stopColor="#a80000" />
                                    </radialGradient>
                                </defs>
                                <ellipse cx="42" cy="42" rx="41" ry="41" fill="url(#tinyGray)" stroke="#222" strokeWidth="2" />
                                <path d="M32 2 C48 -2 68 8 76 22 Q66 25 54 28 C48 18 42 10 32 2 Z" fill="url(#tinyRed)" stroke="#222" strokeWidth="2" />
                                <path d="M54 28 C36 34 20 44 8 58 C20 78 40 86 54 80 C64 66 62 42 54 28 Z" fill="url(#tinyRed)" stroke="#222" strokeWidth="2" />
                            </SmallBall>
                            <div>
                                <SideLine $h={52}>-</SideLine>
                                <SideLine $h={52}>0 km</SideLine>
                            </div>
                        </BallRow>
                    </SidePanel>
                </Side>
                <Main>
                    <TabBar>
                        <Tab $w={138} $active>Location</Tab>
                        <Tab $w={180}>Magnitudes</Tab>
                        <Tab $w={102}>Event</Tab>
                        <Tab $w={117}>Events</Tab>
                    </TabBar>
                    <Panel>
                        <TopRow>
                            <MapColumn>
                                <RegionTitle>Northern Mid Atlantic Ridge</RegionTitle>
                                <LocationMap />
                            </MapColumn>
                            <InfoColumn>
                                <FactRow $h={58}><FactLabel>Time:</FactLabel><FactWide $bold $digits>2019-09-02 22:45:47</FactWide></FactRow>
                                <FactRow $h={58}><FactLabel>Depth:</FactLabel><FactNumber $bold>0</FactNumber><span>km</span><span>fixed</span></FactRow>
                                <FactRow $h={58}><FactLabel>Lat:</FactLabel><FactNumber $bold>23.74</FactNumber><span>° N</span><span>+/- 1 km</span></FactRow>
                                <FactRow $h={58}><FactLabel>Lon:</FactLabel><FactNumber $bold>45.16</FactNumber><span>° W</span><span>+/- 1 km</span></FactRow>
                                <FactRow $h={58}><FactLabel>Phases:</FactLabel><FactNumber $bold>498</FactNumber><span>&nbsp;&nbsp;/</span><span>523</span></FactRow>
                                <FactRow $h={58}><FactLabel>RMS Res.:</FactLabel><FactNumber>1.0</FactNumber><span>s</span></FactRow>
                                <FactRow $h={58}><FactLabel>Az. Gap:</FactLabel><FactNumber>42</FactNumber><span>°</span></FactRow>
                                <FactRow $h={58}><FactLabel>Min. Dist.:</FactLabel><FactNumber>16.7</FactNumber><span>°</span></FactRow>
                                <Rule $top={7} $bottom={9} />
                                <FactRow $h={52}><FactLabel>EventID:</FactLabel><FactWide>rs2019rfnv</FactWide></FactRow>
                                <FactRow $h={52}><FactLabel>Agency:</FactLabel><FactWide $bold>RASPISHAKE</FactWide></FactRow>
                                <FactRow $h={52}><FactLabel>Author:</FactLabel><FactWide $bold $fade>scolv@awips02.int.extormed.com</FactWide></FactRow>
                                <FactRow $h={52}><FactLabel>Evaluation:</FactLabel><FactWide>confirmed (M)</FactWide></FactRow>
                                <FactRow $h={52}><FactLabel>Method:</FactLabel><FactWide>LOCSAT</FactWide></FactRow>
                                <FactRow $h={52}><FactLabel>Earth model:</FactLabel><FactWide>iasp91</FactWide></FactRow>
                                <FactRow $h={52}><FactLabel>Updated:</FactLabel><FactWide>2019-09-02 23:37:26</FactWide></FactRow>
                            </InfoColumn>
                            <PlotColumn>
                                <PlotTabs>
                                    <PlotTab $w={140}>Distance</PlotTab>
                                    <PlotTab $w={136}>Azimuth</PlotTab>
                                    <PlotTab $w={172}>TravelTime</PlotTab>
                                    <PlotTab $w={150}>MoveOut</PlotTab>
                                    <PlotTab $w={100}>Polar</PlotTab>
                                    <PlotTab $w={176} $active>FirstMotion</PlotTab>
                                </PlotTabs>
                                <PlotLine $h={58}>Filter is <LinkText>not active</LinkText></PlotLine>
                                <PlotLine $h={38} $gap={8}>NP1: <LinkText>343/55/22</LinkText> NP2: <LinkText>240/72/143</LinkText></PlotLine>
                                <PlotBody>
                                    <FocalBall />
                                    <CornerButton $w={50} $gap={86}>C<Caret $low /></CornerButton>
                                </PlotBody>
                            </PlotColumn>
                        </TopRow>
                        <Arrivals />
                        <ControlRow>
                            <Combo $w={159} $off>
                                <ComboText>LOCSAT</ComboText>
                                <ComboArrow><Caret $color="#a0a5a8" /></ComboArrow>
                            </Combo>
                            <Wrench />
                            <Label $gap={54} $w={105}>Profile:</Label>
                            <Combo $w={135}>
                                <ComboText>iasp91</ComboText>
                                <ComboArrow><Caret /></ComboArrow>
                            </Combo>
                            <CheckSlot $gap={59}><CheckBox /></CheckSlot>
                            <Label $gap={13} $w={141}>Fix depth</Label>
                            <NumberInput>0</NumberInput>
                            <Label $gap={14} $w={95}>km</Label>
                            <CheckSlot><CheckBox $disabled /></CheckSlot>
                            <Label $gap={13} $w={220} $off>Distance cutoff</Label>
                            <NumberInput>1000</NumberInput>
                            <Label $gap={15} $w={96}>km</Label>
                            <CheckSlot><CheckBox /></CheckSlot>
                            <Label $gap={12} $w={280}>Ignore initial location</Label>
                            <Push />
                            <Bubble />
                        </ControlRow>
                        <ButtonRow>
                            <Button $w={131}>Relocate</Button>
                            <Push />
                            <Button $w={98}>Picker</Button>
                            <Button $w={178} $gap={18}>Import picks</Button>
                            <Button $w={292} $gap={18} $off>Compute magnitudes</Button>
                            <Button $w={133} $gap={18}>Commit<Caret $low /></Button>
                        </ButtonRow>
                    </Panel>
                </Main>
            </Body>
            <StatusBar>
                <span>A new origin arrived at 2019-09-02 19:38:56 (localtime)</span>
                <svg width="28" height="32" viewBox="0 0 28 32">
                    <path d="M6 1 L22 15 L26 27 L20 31 L5 17 L1 6 Z" fill="#e0e4ff" stroke="#7a7fd0" strokeWidth="2" />
                    <path d="M5 17 L22 15" fill="none" stroke="#7a7fd0" strokeWidth="2" />
                </svg>
            </StatusBar>
        </Window>
    );
}
